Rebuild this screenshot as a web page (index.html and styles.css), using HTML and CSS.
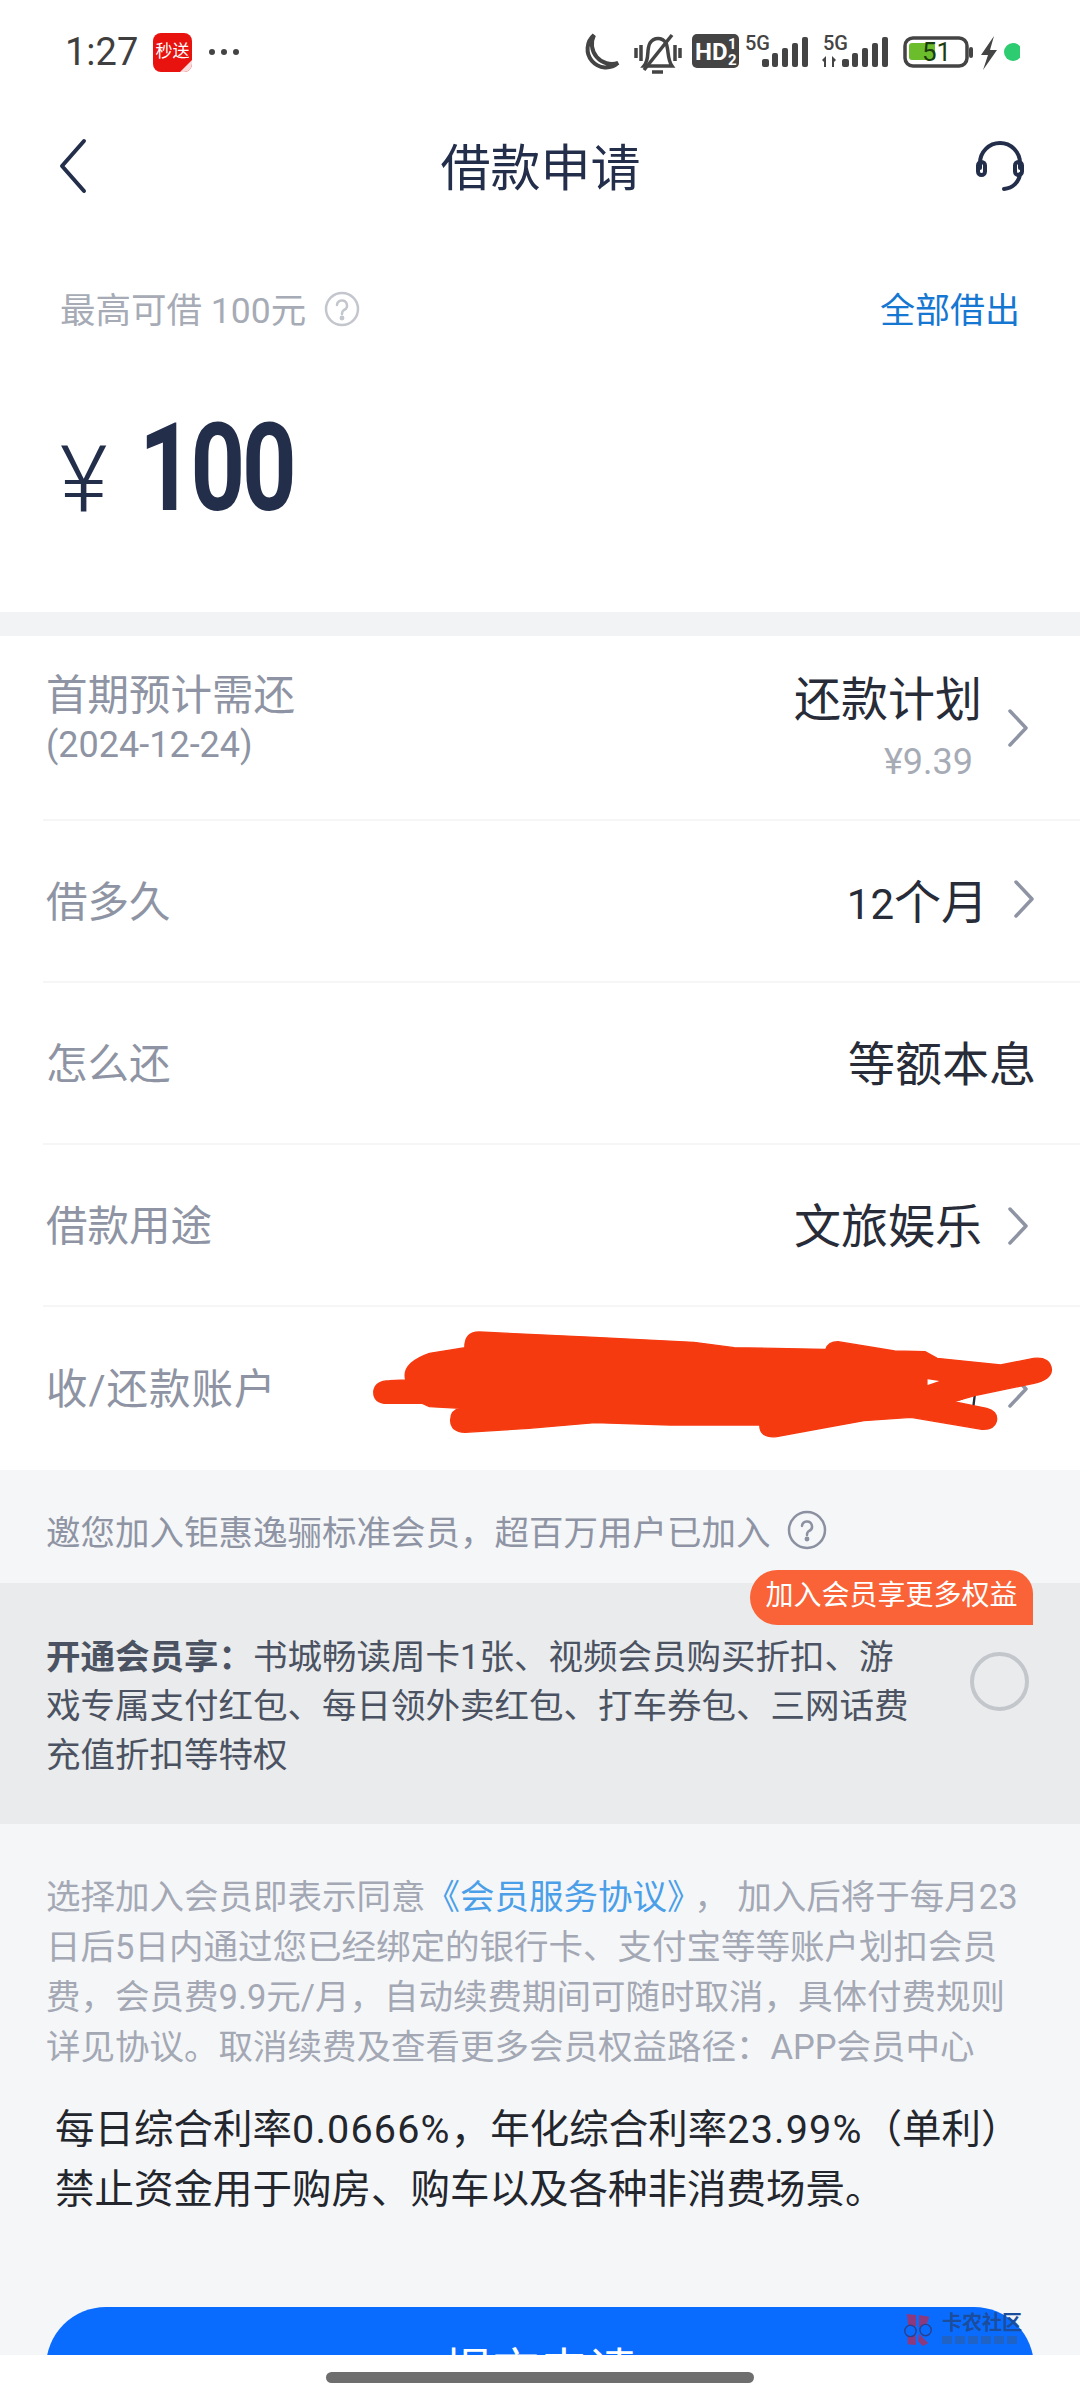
FILE: index.html
```html
<!DOCTYPE html>
<html lang="zh-CN">
<head>
  <meta charset="UTF-8" />
  <meta name="viewport" content="width=device-width, initial-scale=1.0"/>
  <title>借款申请</title>
  <link rel="stylesheet" href="styles.css">
</head>
<body>
  <div class="page">
    <div class="status-bar">
      <div class="status-left">
        <span class="time">1:27</span>
        <div class="app-badge">秒送</div>
        <svg class="more-dots" viewBox="0 0 32 8"><circle cx="4" cy="4" r="3"/><circle cx="16" cy="4" r="3"/><circle cx="28" cy="4" r="3"/></svg>
      </div>
      <svg class="status-icons" viewBox="0 0 450 50">
        <path class="line" d="M24 5 A16 16 0 1 0 48 33 A20 20 0 0 1 24 5Z" stroke-width="4"/>
        <g class="line" stroke-width="3.5">
          <path d="M74 36 C80 29 76 20 80 13 C84 7 92 7 96 13 C99 20 97 29 102 36 Z"/>
          <path d="M82 42 H93"/>
          <path d="M102 5 L74 40"/>
          <path d="M66 18 V28 M71 15 V31 M105 15 V31 M110 18 V28"/>
        </g>
        <rect class="fill" x="122" y="4" width="47" height="34" rx="5"/>
        <text class="hd-text" x="125" y="30">HD</text>
        <text class="hd-frac" x="158" y="19">1</text>
        <text class="hd-frac" x="158" y="35">2</text>
        <text class="net-text" x="175" y="20">5G</text>
        <rect class="fill" x="192" y="29" width="7" height="8" rx="2"/>
        <rect class="fill" x="202" y="23" width="6" height="14" rx="2"/>
        <rect class="fill" x="212" y="18" width="6" height="19" rx="2"/>
        <rect class="fill" x="222" y="13" width="6" height="24" rx="2"/>
        <rect class="fill" x="232" y="7" width="6" height="30" rx="2"/>
        <text class="net-text" x="253" y="20">5G</text>
        <path class="fill" d="M252 30 l4 -4 v11 h-2 v-5z M266 30 l-4 -4 v11 h2 v-5z"/>
        <rect class="fill" x="272" y="29" width="7" height="8" rx="2"/>
        <rect class="fill" x="282" y="23" width="6" height="14" rx="2"/>
        <rect class="fill" x="292" y="18" width="6" height="19" rx="2"/>
        <rect class="fill" x="302" y="13" width="6" height="24" rx="2"/>
        <rect class="fill" x="312" y="7" width="6" height="30" rx="2"/>
        <rect class="line" x="335" y="8" width="62" height="28" rx="8" stroke-width="3.5"/>
        <rect class="batt-level" x="339" y="13" width="26" height="17" rx="3"/>
        <text class="batt-text" x="352" y="31">51</text>
        <rect class="fill" x="399" y="17" width="4" height="11" rx="2"/>
        <path class="fill" d="M424 6 L411 25 H418 L413 40 L427 20 H420 Z"/>
        <circle class="green-dot" cx="443" cy="22" r="9"/>
      </svg>
    </div>

    <div class="nav-bar">
      <svg class="nav-back" viewBox="0 0 40 60"><path class="nav-line" d="M29 6 L7 31 L29 56"/></svg>
      <h1 class="nav-title">借款申请</h1>
      <svg class="nav-service" viewBox="0 0 50 54">
        <path class="nav-line" d="M5 30 V25 A20 20 0 0 1 45 25 V30"/>
        <rect class="nav-line" x="3" y="24" width="7" height="13" rx="3.5"/>
        <rect class="nav-line" x="40" y="24" width="7" height="13" rx="3.5"/>
        <path class="nav-line" d="M45 36 C44 44 38 50 29 51"/>
      </svg>
    </div>

    <section class="hero">
      <div class="limit-row">
        <div class="limit-text">最高可借 100元
          <svg class="help-icon help-light" viewBox="0 0 36 36"><circle cx="18" cy="18" r="16"/><path d="M13 14 A5 5 0 1 1 20 19 Q18 20 18 23"/><circle class="help-dot" cx="18" cy="27" r="1.2"/></svg>
        </div>
        <a class="borrow-all" href="#">全部借出</a>
      </div>
      <div class="amount-row">
        <span class="currency">¥</span>
        <span class="amount">100</span>
      </div>
    </section>

    <section class="rows">
      <div class="row row-first">
        <div class="row-label row-label-first">
          <div>首期预计需还</div>
          <div class="row-date">(2024-12-24)</div>
        </div>
        <div class="row-right">
          <div class="plan">
            <div class="row-value">还款计划</div>
            <div class="plan-amount">¥9.39</div>
          </div>
          <svg class="chevron chevron-inset" viewBox="0 0 24 40"><path d="M4 3 L20 20 L4 37"/></svg>
        </div>
      </div>
      <div class="row">
        <div class="row-label">借多久</div>
        <div class="row-right">
          <div class="row-value"><span class="digits">12</span>个月</div>
          <svg class="chevron" viewBox="0 0 24 40"><path d="M4 3 L20 20 L4 37"/></svg>
        </div>
      </div>
      <div class="row">
        <div class="row-label">怎么还</div>
        <div class="row-right">
          <div class="row-value">等额本息</div>
        </div>
      </div>
      <div class="row">
        <div class="row-label">借款用途</div>
        <div class="row-right">
          <div class="row-value">文旅娱乐</div>
          <svg class="chevron chevron-inset" viewBox="0 0 24 40"><path d="M4 3 L20 20 L4 37"/></svg>
        </div>
      </div>
      <div class="row row-last">
        <div class="row-label row-label-wide">收/还款账户</div>
        <div class="row-right">
          <svg class="chevron chevron-inset" viewBox="0 0 24 40"><path d="M4 3 L20 20 L4 37"/></svg>
        </div>
      </div>
    </section>

    <div class="invite">邀您加入钜惠逸骊标准会员，超百万用户已加入
      <svg class="help-icon help-dark" viewBox="0 0 40 40"><circle cx="20" cy="20" r="18"/><path d="M15 16 A5 5 0 1 1 22 21 Q20 22 20 25"/><circle class="help-dot" cx="20" cy="29" r="1.2"/></svg>
    </div>

    <section class="member">
      <div class="member-badge">加入会员享更多权益</div>
      <p class="member-text"><b>开通会员享：</b>书城畅读周卡1张、视频会员购买折扣、游戏专属支付红包、每日领外卖红包、打车券包、三网话费充值折扣等特权</p>
      <span class="member-radio"></span>
    </section>

    <section class="terms">
      <p class="terms-text">选择加入会员即表示同意<a href="#">《会员服务协议》</a>， 加入后将于每月23日后5日内通过您已经绑定的银行卡、支付宝等等账户划扣会员费，会员费9.9元/月，自动续费期间可随时取消，具体付费规则详见协议。取消续费及查看更多会员权益路径：APP会员中心</p>
      <p class="rate-text">每日综合利率<span class="rate-num">0.0666%</span>，年化综合利率<span class="rate-num">23.99%</span>（单利）<br>禁止资金用于购房、购车以及各种非消费场景。</p>
      <button class="submit-button">提交申请</button>
    </section>

    <svg class="scribble" viewBox="0 0 1568 540" preserveAspectRatio="none">
      <path class="peek" d="M1345 285 L1342 320 M1300 302 Q1320 300 1325 288"/>
      <path class="ink" d="M72 275 Q75 242 105 242 L140 240 Q130 190 190 160 L265 143 Q265 96 295 96 L540 112 L750 127 L835 143 L1030 148 Q1035 125 1055 125 L1175 153 L1240 155 L1265 175 L1400 195 L1470 175 Q1505 170 1507 210 Q1505 240 1470 250 L1350 285 L1300 305 L1370 325 Q1395 335 1390 365 Q1385 390 1360 388 L1210 352 L1110 362 L1000 390 L925 410 Q890 415 890 375 L700 375 L540 368 L400 385 L265 397 Q235 395 235 360 Q235 330 255 325 L190 320 L175 310 L100 310 Q72 310 72 275 Z"/>
      <path class="speck" d="M1245 238 L1270 243 L1245 255 Z"/>
    </svg>

    <div class="watermark">
      <svg class="watermark-logo" viewBox="0 0 34 36">
        <path class="wm-petal" d="M5 1 L15 2 L15 14 L7 15 Z M18 2 L29 4 L25 15 L18 15 Z M6 23 L14 19 L15 34 L6 33 Z M18 22 L28 32 L22 35 L17 30 Z"/>
        <circle class="wm-ring" cx="9" cy="19" r="6"/>
        <circle class="wm-ring" cx="25" cy="18" r="6"/>
      </svg>
      <div class="watermark-text">
        <div class="wm-name">卡农社区</div>
        <div class="wm-sub"><i></i><i></i><i></i><i></i><i></i><i></i></div>
      </div>
    </div>

    <div class="home-bar"><span class="home-indicator"></span></div>
  </div>
</body>
</html>
```

FILE: styles.css
```css
:root {
  --navy: #232e4b;
  --label: #8e94a3;
  --value: #272c38;
  --panel: #f5f6f8;
  --stack: Roboto, "Noto Sans CJK SC", sans-serif;
}

* {
  box-sizing: border-box;
}

body {
  margin: 0;
  background: #fff;
  font-family: var(--stack);
}

p, h1 {
  margin: 0;
}

a {
  text-decoration: none;
}

.page {
  position: relative;
  width: 1080px;
  height: 2400px;
  overflow: hidden;
}

/* status bar */
.status-bar {
  height: 100px;
  padding: 30px 60px 0 65px;
  display: flex;
  justify-content: space-between;
  align-items: flex-start;
}

.status-left {
  display: flex;
  align-items: center;
  height: 44px;
}

.time {
  font-size: 38px;
  color: #3f3f3f;
  width: 88px;
}

.app-badge {
  position: relative;
  width: 39px;
  height: 39px;
  border-radius: 8px;
  background: #e8130f;
  color: #fff;
  font-size: 17px;
  line-height: 37px;
  text-align: center;
  white-space: nowrap;
  overflow: hidden;
}

.app-badge::after {
  content: "";
  position: absolute;
  right: 0;
  bottom: 0;
  border-left: 12px solid transparent;
  border-bottom: 12px solid #f7dcdc;
}

.more-dots {
  width: 32px;
  height: 8px;
  margin-left: 16px;
  fill: #444;
}

.status-icons {
  width: 450px;
  height: 50px;
}

.status-icons .line {
  fill: none;
  stroke: #444;
}

.status-icons .fill {
  fill: #444;
}

.hd-text {
  font: 700 24px Roboto, sans-serif;
  fill: #fff;
}

.hd-frac {
  font: 700 15px Roboto, sans-serif;
  fill: #fff;
}

.net-text {
  font: 500 20px Roboto, sans-serif;
  fill: #444;
}

.batt-level {
  fill: #6cbd2c;
}

.batt-text {
  font: 400 26px Roboto, sans-serif;
  fill: #1b3d0e;
}

.green-dot {
  fill: #2ecc71;
}

/* nav */
.nav-bar {
  height: 130px;
  padding: 0 55px 0 55px;
  display: flex;
  justify-content: space-between;
  align-items: center;
}

.nav-back {
  width: 40px;
  height: 60px;
}

.nav-service {
  width: 50px;
  height: 54px;
}

.nav-line {
  fill: none;
  stroke: var(--navy);
  stroke-width: 4;
  stroke-linecap: round;
  stroke-linejoin: round;
}

.nav-title {
  font-size: 50px;
  font-weight: 400;
  color: var(--navy);
  margin: 0 0 3px 11px;
}

/* amount */
.hero {
  height: 382px;
  padding: 47px 60px 0;
}

.limit-row {
  display: flex;
  justify-content: space-between;
  align-items: center;
  height: 60px;
}

.limit-text {
  display: flex;
  align-items: center;
  font-size: 35.5px;
  color: #a6abb6;
}

.borrow-all {
  font-size: 35px;
  color: #1677d2;
}

.help-icon {
  fill: none;
  stroke-linecap: round;
}

.help-light {
  width: 36px;
  height: 36px;
  margin: 4px 0 0 18px;
  stroke: #c3c6cd;
  stroke-width: 2.5;
}

.help-dark {
  width: 40px;
  height: 40px;
  margin-left: 16px;
  stroke: #8b91a0;
  stroke-width: 2.5;
}

.amount-row {
  display: flex;
  align-items: center;
  margin-top: 82px;
  height: 100px;
  color: var(--navy);
}

.currency {
  font-size: 92px;
  font-weight: 300;
  width: 79px;
  margin-top: 22px;
}

.amount {
  font-size: 122px;
  font-weight: 700;
  line-height: 1;
  display: inline-block;
  letter-spacing: -4px;
  transform: scaleX(0.78);
  transform-origin: left center;
}

/* detail rows */
.rows {
  border-top: 24px solid #f2f3f5;
  background: #fff;
  padding-left: 43px;
}

.row {
  height: 162px;
  padding: 0 44px 5px 3px;
  display: flex;
  justify-content: space-between;
  align-items: center;
  border-bottom: 2px solid #f6f6f7;
}

.row-first {
  height: 185px;
}

.row-last {
  border-bottom: 0;
  height: 163px;
}

.row-label {
  font-size: 41.5px;
  color: var(--label);
}

.row-label-first {
  padding-bottom: 22px;
}

.row-label-wide {
  letter-spacing: 1px;
}

.row-date {
  font-size: 36px;
  margin-top: 2px;
}

.row-right {
  display: flex;
  align-items: center;
}

.row-value {
  font-size: 47px;
  color: var(--value);
}

.digits {
  font-size: 42px;
}

.plan {
  text-align: right;
  padding-bottom: 6px;
}

.plan-amount {
  font-size: 36px;
  color: #a6abb6;
  margin-top: 11px;
  padding-right: 9px;
}

.chevron {
  width: 24px;
  height: 40px;
  margin-left: 24px;
  fill: none;
  stroke: #8e94a3;
  stroke-width: 3.5;
  stroke-linecap: round;
  stroke-linejoin: round;
}

.chevron-inset {
  margin: 6px 6px 0 24px;
}

.invite {
  height: 113px;
  padding: 6px 0 0 46px;
  display: flex;
  align-items: center;
  background: var(--panel);
  font-size: 34.5px;
  color: #8e94a3;
}

/* member panel */
.member {
  position: relative;
  height: 241px;
  padding: 50px 0 0 46px;
  background: #e9ebed;
}

.member-badge {
  position: absolute;
  top: -13px;
  right: 47px;
  width: 283px;
  height: 55px;
  border-radius: 28px 24px 0 28px;
  background: #f96337;
  color: #fff;
  font-size: 28px;
  line-height: 52px;
  text-align: center;
}

.member-text {
  width: 870px;
  font-size: 34.5px;
  line-height: 49px;
  color: #4b5261;
}

.member-text b {
  font-weight: 700;
}

.member-radio {
  position: absolute;
  left: 970px;
  top: 69px;
  width: 59px;
  height: 59px;
  border: 4px solid #c3c6cb;
  border-radius: 50%;
}

/* terms */
.terms {
  height: 534px;
  padding: 48px 60px 0 46px;
  background: var(--panel);
}

.terms-text {
  font-size: 34.5px;
  line-height: 50px;
  color: #a3a8b4;
}

.terms-text a {
  color: #4a9fe8;
  margin-right: 10px;
}

.rate-text {
  margin: 28px 0 0 9px;
  font-size: 39.5px;
  line-height: 60px;
  color: #23262d;
  white-space: nowrap;
}

.rate-num {
  letter-spacing: 1.2px;
}

.submit-button {
  display: block;
  width: 988px;
  height: 120px;
  margin-top: 87px;
  border: none;
  border-radius: 60px;
  background: #0a6cff;
  color: #fff;
  font-family: var(--stack);
  font-size: 48px;
}

/* overlays */
.scribble {
  position: absolute;
  left: 340px;
  top: 1300px;
  width: 740px;
  height: 180px;
}

.scribble .ink {
  fill: #f63a10;
  stroke: #f63a10;
  stroke-width: 4;
  stroke-linejoin: round;
}

.scribble .peek {
  fill: none;
  stroke: #272c38;
  stroke-width: 5;
}

.scribble .speck {
  fill: #fff;
}

.watermark {
  position: absolute;
  left: 901px;
  top: 2313px;
  display: flex;
  gap: 7px;
}

.watermark-logo {
  width: 34px;
  height: 34px;
}

.wm-petal {
  fill: #8c3a80;
}

.wm-ring {
  fill: #0a6cff;
  stroke: #2c3f8c;
  stroke-width: 1.5;
}

.wm-name {
  font-size: 20px;
  font-weight: 700;
  line-height: 20px;
  color: #1c4d9c;
  white-space: nowrap;
}

.wm-sub {
  display: flex;
  gap: 3px;
  margin-top: 3px;
}

.wm-sub i {
  width: 10px;
  height: 8px;
  background: #1f63c6;
}

.home-bar {
  position: absolute;
  left: 0;
  bottom: 0;
  width: 100%;
  height: 45px;
  background: #fff;
  display: flex;
  justify-content: center;
  padding-top: 17px;
}

.home-indicator {
  width: 428px;
  height: 11px;
  border-radius: 6px;
  background: #6e6e6e;
}
```
